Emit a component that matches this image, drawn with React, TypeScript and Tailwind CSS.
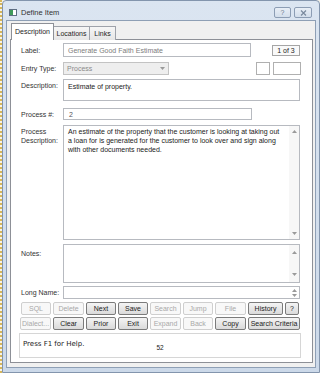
import type { ReactNode } from "react";

function Btn({ label, w, on }: { label: string; w: string; on?: boolean }) {
	return (
		<div
			className={
				w +
				" flex h-[13px] shrink-0 items-center justify-center rounded-[2px] border text-[7px] leading-none " +
				(on
					? "border-[#7b7b7b] bg-linear-to-b from-[#f4f4f4] to-[#dadada] text-[#222]"
					: "border-[#cfcfcf] bg-[#f8f8f8] text-[#a8a8a8]")
			}
		>
			{label}
		</div>
	);
}

function Field({ label, children, className, labelClass }: { label: ReactNode; children: ReactNode; className: string; labelClass?: string }) {
	return (
		<div className={"flex " + className}>
			<div className={"w-[52px] shrink-0 pl-[10px] text-[#333] " + (labelClass ?? "self-center")}>{label}</div>
			{children}
		</div>
	);
}

function Arrow({ up }: { up?: boolean }) {
	return (
		<svg width="5" height="3" viewBox="0 0 5 3" className="block">
			<path d={up ? "M0 3 L2.5 0 L5 3 Z" : "M0 0 L2.5 3 L5 0 Z"} fill="#9a9a9a" />
		</svg>
	);
}

export default function App() {
	return (
		<div className="flex h-[373px] w-[320px] overflow-hidden bg-[#f7f4ea] font-['Liberation_Sans',Arial,sans-serif] text-[7px] leading-none text-[#1e1e1e]">
			<div className="w-[2px] border-l-2 border-dotted border-[#d6b65a]" />
			<div className="flex flex-1 flex-col rounded-t-[4px] border border-[#8395ad] bg-linear-to-b from-[#dbe5f1] to-[#ccd9e9]">
				{/* Title bar */}
				<div className="flex h-[19px] shrink-0 items-start pr-[7px] pt-[6px]">
					<div className="ml-[6px] mt-[2px] flex h-[7px] w-[8px] border border-[#5e6e82] bg-white">
						<div className="w-[3px] bg-[#3f9a5a]" />
					</div>
					<span className="ml-[4px] mt-[2px] text-[7.5px] text-[#333]">Define Item</span>
					<div className="ml-auto flex gap-[3px]">
						<div className="flex h-[11px] w-[17px] items-center justify-center rounded-[2px] border border-[#8c9db4] bg-linear-to-b from-[#e8eef6] to-[#d3deeb] text-[7px] text-[#6b7b8f]">
							?
						</div>
						<div className="flex h-[11px] w-[18px] items-center justify-center rounded-[2px] border border-[#8c9db4] bg-linear-to-b from-[#e8eef6] to-[#d3deeb]">
							<svg width="7" height="6" viewBox="0 0 7 6">
								<path d="M1 0.5 L6 5.5 M6 0.5 L1 5.5" stroke="#7a8a9e" strokeWidth="1.2" fill="none" />
							</svg>
						</div>
					</div>
				</div>

				{/* Client */}
				<div className="mx-[3px] mb-[4px] flex flex-1 flex-col border border-[#8e9fb5] bg-[#f0f0f0] pb-[4px] pl-[3px] pr-[2px] pt-[2px]">
					{/* Tabs */}
					<div className="relative z-10 -mb-px flex h-[17px] shrink-0 items-end pl-[1px]">
						<div className="flex h-[17px] w-[43px] items-center justify-center border border-b-0 border-[#8d9097] bg-white pb-[1px]">
							Description
						</div>
						<div className="flex h-[14px] w-[36px] items-center justify-center border border-b-0 border-l-0 border-[#9ea2aa] bg-linear-to-b from-[#f6f6f6] to-[#e6e6e6]">
							Locations
						</div>
						<div className="flex h-[14px] w-[26px] items-center justify-center border border-b-0 border-l-0 border-[#9ea2aa] bg-linear-to-b from-[#f6f6f6] to-[#e6e6e6]">
							Links
						</div>
					</div>

					{/* Panel */}
					<div className="flex flex-1 flex-col border border-[#8d9097] bg-white">
						<Field label="Label:" className="mt-[3px] h-[14px]">
							<div className="flex w-[188px] items-center border border-[#b7bac0] pl-[4px] text-[#7d7d7d]">Generate Good Faith Estimate</div>
							<div className="ml-[21px] flex h-[11px] w-[28px] items-center justify-center self-center border border-[#a5a5a5] bg-[#f9f9f9]">1 of 3</div>
						</Field>

						<Field label="Entry Type:" className="mt-[5px] h-[13px]">
							<div className="flex w-[106px] items-center justify-between border border-[#c3c3c3] bg-[#eeeeee] pl-[3px] pr-[3px] text-[#8a8a8a]">
								Process
								<Arrow />
							</div>
							<div className="ml-[87px] w-[14px] border border-[#b0b0b0] bg-white" />
							<div className="ml-[3px] w-[28px] border border-[#b0b0b0] bg-white" />
						</Field>

						<Field label="Description:" className="mt-[4px] h-[22px]" labelClass="pt-[3px]">
							<div className="w-[237px] border border-[#b7bac0] pl-[4px] pt-[3px] text-[#222]">Estimate of property.</div>
						</Field>

						<Field label="Process #:" className="mt-[7px] h-[12px]">
							<div className="flex w-[189px] items-center border border-[#b7bac0] pl-[5px] text-[#555]">2</div>
						</Field>

						<Field
							label={
								<>
									Process
									<br />
									Description:
								</>
							}
							className="mt-[5px] h-[115px]"
							labelClass="pt-[2px] leading-[9px]"
						>
							<div className="flex w-[237px] border border-[#b7bac0]">
								<div className="w-[219px] pl-[4px] pt-[1px] leading-[9px] text-[#222]">
									An estimate of the property that the customer is looking at taking out a loan for is generated for the customer to look over and sign along with
									other documents needed.
								</div>
								<div className="ml-auto flex w-[10px] flex-col items-center justify-between bg-[#f7f7f7] py-[4px]">
									<Arrow up />
									<Arrow />
								</div>
							</div>
						</Field>

						<Field label="Notes:" className="mt-[4px] h-[39px]" labelClass="pt-[6px]">
							<div className="flex w-[237px] justify-end border border-[#b7bac0]">
								<div className="flex w-[10px] flex-col items-center justify-between bg-[#f7f7f7] py-[6px]">
									<Arrow up />
									<Arrow />
								</div>
							</div>
						</Field>

						<Field label="Long Name:" className="mt-[3px] h-[13px]">
							<div className="flex w-[237px] justify-end border border-[#b7bac0]">
								<div className="flex w-[10px] flex-col items-center justify-center gap-[2px]">
									<Arrow up />
									<Arrow />
								</div>
							</div>
						</Field>

						<div className="mt-[3px] flex gap-[2px] pl-[10px]">
							<Btn label="SQL" w="w-[30px]" />
							<Btn label="Delete" w="w-[31px]" />
							<Btn label="Next" w="w-[30px]" on />
							<Btn label="Save" w="w-[30px]" on />
							<Btn label="Search" w="w-[31px]" />
							<Btn label="Jump" w="w-[30px]" />
							<Btn label="File" w="w-[31px]" />
							<Btn label="History" w="w-[35px]" on />
							<Btn label="?" w="w-[14px]" on />
						</div>
						<div className="mt-[2px] flex gap-[2px] pl-[9px]">
							<Btn label="Dialect..." w="w-[31px]" />
							<Btn label="Clear" w="w-[31px]" on />
							<Btn label="Prior" w="w-[30px]" on />
							<Btn label="Exit" w="w-[30px]" on />
							<Btn label="Expand" w="w-[31px]" />
							<Btn label="Back" w="w-[30px]" />
							<Btn label="Copy" w="w-[31px]" on />
							<Btn label="Search Criteria" w="w-[52px]" on />
						</div>

						<div className="ml-[8px] mt-[3px] flex h-[25px] w-[282px] border border-[#d6d6d6] bg-white pl-[3px] pt-[7px]">
							<span className="font-['DejaVu_Sans',sans-serif] text-[7px] text-[#222]">Press F1 for Help.</span>
							<span className="ml-[72px] mt-[4px] text-[6.5px] text-[#222]">52</span>
						</div>
					</div>
				</div>
			</div>
		</div>
	);
}
